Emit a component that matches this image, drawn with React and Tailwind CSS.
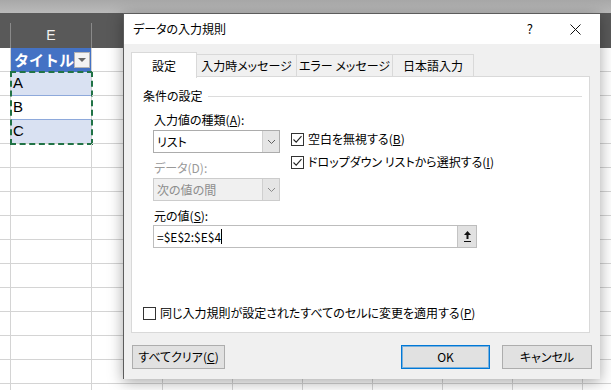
import React from "react";

const jp = "font-['Yu_Gothic_UI','Noto_Sans_CJK_JP',sans-serif] [font-feature-settings:'palt']";

const colWidths = [
  "w-[11px]",
  "w-[81px]",
  "w-[71px]",
  "w-[70px]",
  "w-[70px]",
  "w-[70px]",
  "w-[70px]",
  "w-[70px]",
  "w-[70px]",
  "w-[70px]",
];

const ROWS = 15;

function Cell({ children, className = "" }) {
  return (
    <div className={`h-[24px] shrink-0 border-b border-r border-[#d4d4d4] flex items-center ${className}`}>
      {children}
    </div>
  );
}

function Chevron({ color = "#606060" }) {
  return (
    <svg width="9" height="6" viewBox="0 0 9 6">
      <path d="M1 1 L4.5 4.5 L8 1" fill="none" stroke={color} strokeWidth="1" />
    </svg>
  );
}

function Check({ checked, children }) {
  return (
    <div className="flex items-center h-[18px]">
      <div className="w-[13px] h-[13px] border border-[#333333] bg-white flex items-center justify-center">
        {checked && (
          <svg width="11" height="11" viewBox="0 0 11 11">
            <path d="M1.5 5.5 L4.2 8.2 L9.5 2.2" fill="none" stroke="#222222" strokeWidth="1.1" />
          </svg>
        )}
      </div>
      <span className="ml-[4px] text-[12px] text-black leading-none">{children}</span>
    </div>
  );
}

function Combo({ value, disabled }) {
  return (
    <div
      className={`flex h-[23px] border ${
        disabled ? "border-[#cccccc] bg-[#f0f0f0]" : "border-[#acacac] bg-white"
      }`}
    >
      <div
        className={`flex-1 flex items-center pl-[3px] text-[12px] ${
          disabled ? "text-[#8d8d8d]" : "text-black"
        }`}
      >
        {value}
      </div>
      <div className="w-[17px] bg-[#e5e5e5] border-l border-[#cfcfcf] flex items-center justify-center">
        <Chevron color={disabled ? "#8a8a8a" : "#606060"} />
      </div>
    </div>
  );
}

function Sheet() {
  return (
    <div className="flex flex-col w-[611px] h-[390px] overflow-hidden bg-white">
      <div className="h-[13px] shrink-0 bg-gradient-to-b from-[#a8a8a8] to-[#bababa]" />
      <div className="h-[10px] shrink-0 bg-[#595959]" />
      <div className="flex">
        {colWidths.map((w, i) => (
          <div key={i} className={`${w} shrink-0 flex flex-col`}>
            <div className="h-[25px] bg-[#595959] border-r border-[#8a8a8a] flex items-center justify-center text-[14px] text-[#f2f2f2] font-['Liberation_Sans',sans-serif]">
              {i === 1 ? "E" : ""}
            </div>
            {i === 1 ? (
              <>
                <Cell className="bg-[#4472c4] border-b-[#4472c4] justify-between pl-[3px] pr-[1px]">
                  <span className="text-[15px] font-bold text-white font-['Noto_Sans_CJK_JP',sans-serif] leading-none">
                    タイトル
                  </span>
                  <div className="w-[16px] h-[16px] bg-[#f3f3f3] border border-[#b4b4b4] flex items-center justify-center">
                    <div className="w-0 h-0 border-l-[4px] border-r-[4px] border-t-[4px] border-l-transparent border-r-transparent border-t-[#666666] mt-[1px]" />
                  </div>
                </Cell>
                <div className="outline-2 outline-dashed outline-[#217346] outline-offset-[-1px]">
                  {["A", "B", "C"].map((t, k) => (
                    <Cell
                      key={t}
                      className={`pl-[2px] text-[15px] text-black font-['Liberation_Sans',sans-serif] ${
                        k === 1 ? "bg-white" : "bg-[#d9e1f2]"
                      } ${k < 2 ? "border-b-[#8ea9db]" : ""}`}
                    >
                      {t}
                    </Cell>
                  ))}
                </div>
                {Array.from({ length: ROWS - 4 }).map((_, r) => (
                  <Cell key={r} />
                ))}
              </>
            ) : (
              Array.from({ length: ROWS }).map((_, r) => <Cell key={r} />)
            )}
          </div>
        ))}
      </div>
    </div>
  );
}

function Dialog() {
  return (
    <div
      className={`absolute left-[123px] top-[13px] w-[477px] h-[366px] bg-[#f0f0f0] border-l border-t border-[#5c5c5c] shadow-[0_3px_14px_rgba(0,0,0,0.35)] flex flex-col ${jp}`}
    >
      <div className="h-[30px] shrink-0 bg-white flex items-center pl-[9px] text-[12px] text-black">
        <span>データの入力規則</span>
        <span className="ml-auto text-[13px]">?</span>
        <svg className="ml-[37px] mr-[19px]" width="11" height="11" viewBox="0 0 11 11">
          <path d="M0.5 0.5 L10.5 10.5 M10.5 0.5 L0.5 10.5" stroke="#111111" strokeWidth="1" />
        </svg>
      </div>

      <div className="flex flex-col pl-[7px] pr-[8px] pt-[8px]">
        <div className="flex items-end h-[25px] text-[12px] text-black">
          <div className="relative z-10 -mb-px w-[66px] h-[26px] bg-white border border-b-0 border-[#d9d9d9] flex items-center justify-center">
            設定
          </div>
          <div className="w-[100px] h-[23px] bg-[#f0f0f0] border border-l-0 border-b-0 border-[#d9d9d9] flex items-center justify-center">
            入力時メッセージ
          </div>
          <div className="w-[96px] h-[23px] bg-[#f0f0f0] border border-l-0 border-b-0 border-[#d9d9d9] flex items-center justify-center">
            エラー メッセージ
          </div>
          <div className="w-[81px] h-[23px] bg-[#f0f0f0] border border-l-0 border-b-0 border-[#d9d9d9] flex items-center justify-center">
            日本語入力
          </div>
        </div>

        <div className="-mt-px w-[459px] h-[257px] bg-white border border-[#d9d9d9] flex flex-col text-[12px] text-black">
          <div className="flex items-center h-[16px] mt-[11px] ml-[11px] mr-[7px]">
            <span>条件の設定</span>
            <div className="flex-1 h-px bg-[#dcdcdc] ml-[5px]" />
          </div>

          <div className="flex mt-[7px] ml-[21px]">
            <div className="w-[127px] flex flex-col">
              <div className="h-[18px] flex items-center pl-[1px]">
                入力値の種類(<span className="underline">A</span>):
              </div>
              <div className="mt-[1px]">
                <Combo value="リスト" />
              </div>
              <div className="h-[18px] mt-[6px] flex items-center pl-[1px] text-[#9a9a9a]">
                データ(D):
              </div>
              <div className="mt-[1px]">
                <Combo value="次の値の間" disabled />
              </div>
            </div>
            <div className="ml-[11px] flex flex-col">
              <div className="mt-[19px]">
                <Check checked>
                  空白を無視する(<span className="underline">B</span>)
                </Check>
              </div>
              <div className="mt-[5px]">
                <Check checked>
                  ドロップダウン リストから選択する(<span className="underline">I</span>)
                </Check>
              </div>
            </div>
          </div>

          <div className="h-[18px] mt-[6px] ml-[22px] flex items-center">
            元の値(<span className="underline">S</span>):
          </div>
          <div className="ml-[21px] w-[324px] h-[23px] flex border border-[#bdbdbd] bg-white">
            <div className="flex-1 flex items-center pl-[3px]">
              <span>=$E$2:$E$4</span>
              <span className="w-px h-[15px] bg-black" />
            </div>
            <div className="w-[19px] bg-[#e1e1e1] border-l border-[#c4c4c4] flex items-center justify-center">
              <svg width="9" height="13" viewBox="0 0 9 13">
                <path d="M4.5 1 L1 5 L3.5 5 L3.5 9 L5.5 9 L5.5 5 L8 5 Z" fill="#111111" />
                <rect x="1" y="11" width="7" height="1" fill="#111111" />
              </svg>
            </div>
          </div>

          <div className="mt-auto mb-[10px] ml-[11px]">
            <Check>
              同じ入力規則が設定されたすべてのセルに変更を適用する(<span className="underline">P</span>)
            </Check>
          </div>
        </div>

        <div className="flex mt-[12px] text-[12px] text-black">
          <div className="ml-px w-[93px] h-[24px] bg-[#e1e1e1] border border-[#adadad] flex items-center justify-center">
            すべてクリア(<span className="underline">C</span>)
          </div>
          <div className="ml-auto w-[89px] h-[24px] bg-[#e1e1e1] border border-[#0078d7] shadow-[inset_0_0_0_1px_rgba(0,120,215,0.45)] flex items-center justify-center">
            OK
          </div>
          <div className="ml-[12px] w-[90px] h-[24px] bg-[#e1e1e1] border border-[#adadad] flex items-center justify-center">
            キャンセル
          </div>
        </div>
      </div>
    </div>
  );
}

export default function App() {
  return (
    <div className="relative w-[611px] h-[390px] overflow-hidden">
      <Sheet />
      <Dialog />
    </div>
  );
}
